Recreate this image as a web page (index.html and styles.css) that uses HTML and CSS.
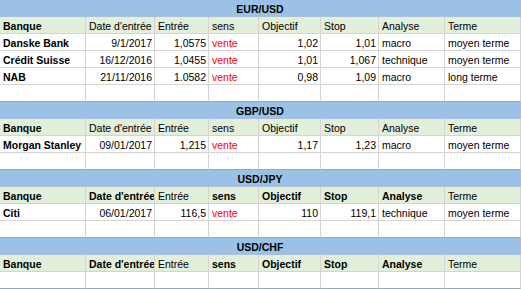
FILE: index.html
```html
<!DOCTYPE html>
<html lang="fr">
<head>
<meta charset="utf-8">
<link rel="stylesheet" href="styles.css">
</head>
<body>
<div class="sheet">
  <div class="band">EUR/USD</div>
  <div class="c hd b">Banque</div><div class="c hd">Date d'entrée</div><div class="c hd">Entrée</div><div class="c hd">sens</div><div class="c hd">Objectif</div><div class="c hd">Stop</div><div class="c hd">Analyse</div><div class="c hd">Terme</div>
  <div class="c b">Danske Bank</div><div class="c r">9/1/2017</div><div class="c r">1,0575</div><div class="c red">vente</div><div class="c r">1,02</div><div class="c r">1,01</div><div class="c">macro</div><div class="c">moyen terme</div>
  <div class="c b">Crédit Suisse</div><div class="c r">16/12/2016</div><div class="c r">1,0455</div><div class="c red">vente</div><div class="c r">1,01</div><div class="c r">1,067</div><div class="c">technique</div><div class="c">moyen terme</div>
  <div class="c b">NAB</div><div class="c r">21/11/2016</div><div class="c r">1.0582</div><div class="c red">vente</div><div class="c r">0,98</div><div class="c r">1,09</div><div class="c">macro</div><div class="c">long terme</div>
  <div class="c end"></div><div class="c end"></div><div class="c end"></div><div class="c end"></div><div class="c end"></div><div class="c end"></div><div class="c end"></div><div class="c end"></div>

  <div class="band">GBP/USD</div>
  <div class="c hd b">Banque</div><div class="c hd">Date d'entrée</div><div class="c hd">Entrée</div><div class="c hd">sens</div><div class="c hd">Objectif</div><div class="c hd">Stop</div><div class="c hd">Analyse</div><div class="c hd">Terme</div>
  <div class="c b">Morgan Stanley</div><div class="c r">09/01/2017</div><div class="c r">1,215</div><div class="c red">vente</div><div class="c r">1,17</div><div class="c r">1,23</div><div class="c">macro</div><div class="c">moyen terme</div>
  <div class="c end"></div><div class="c end"></div><div class="c end"></div><div class="c end"></div><div class="c end"></div><div class="c end"></div><div class="c end"></div><div class="c end"></div>

  <div class="band">USD/JPY</div>
  <div class="c hd b">Banque</div><div class="c hd b">Date d'entrée</div><div class="c hd">Entrée</div><div class="c hd b">sens</div><div class="c hd b">Objectif</div><div class="c hd b">Stop</div><div class="c hd b">Analyse</div><div class="c hd">Terme</div>
  <div class="c b">Citi</div><div class="c r">06/01/2017</div><div class="c r">116,5</div><div class="c red">vente</div><div class="c r">110</div><div class="c r">119,1</div><div class="c">technique</div><div class="c">moyen terme</div>
  <div class="c end"></div><div class="c end"></div><div class="c end"></div><div class="c end"></div><div class="c end"></div><div class="c end"></div><div class="c end"></div><div class="c end"></div>

  <div class="band">USD/CHF</div>
  <div class="c hd b">Banque</div><div class="c hd b">Date d'entrée</div><div class="c hd">Entrée</div><div class="c hd b">sens</div><div class="c hd b">Objectif</div><div class="c hd b">Stop</div><div class="c hd b">Analyse</div><div class="c hd">Terme</div>
  <div class="c end"></div><div class="c end"></div><div class="c end"></div><div class="c end"></div><div class="c end"></div><div class="c end"></div><div class="c end"></div><div class="c end"></div>
</div>
</body>
</html>
```
FILE: styles.css
```css
html, body {
  margin: 0;
  padding: 0;
  background: #ffffff;
}
.sheet {
  display: grid;
  grid-template-columns: 86px 69px 54px 50px 62px 58px 66px 76px;
  grid-auto-rows: 17px;
  width: 521px;
  font-family: "Liberation Sans", Arial, sans-serif;
  font-size: 10.5px;
  color: #000;
}
.band {
  grid-column: 1 / -1;
  background: #9bc2e6;
  text-align: center;
  font-weight: bold;
  line-height: 16px;
  border-bottom: 1px solid #a9c0d8;
  border-right: 1px solid #a9c0d8;
  box-sizing: border-box;
  padding-top: 1px;
}
.c {
  box-sizing: border-box;
  border-right: 1px solid #d4d4d4;
  border-bottom: 1px solid #d4d4d4;
  line-height: 16px;
  padding: 1px 2px 0 3px;
  white-space: nowrap;
  overflow: hidden;
}
.hd {
  background: #e2efda;
}
.b {
  font-weight: bold;
}
.r {
  text-align: right;
}
.red {
  color: #ff0000;
}
.end {
  border-bottom-color: #8eaacc;
}
```
